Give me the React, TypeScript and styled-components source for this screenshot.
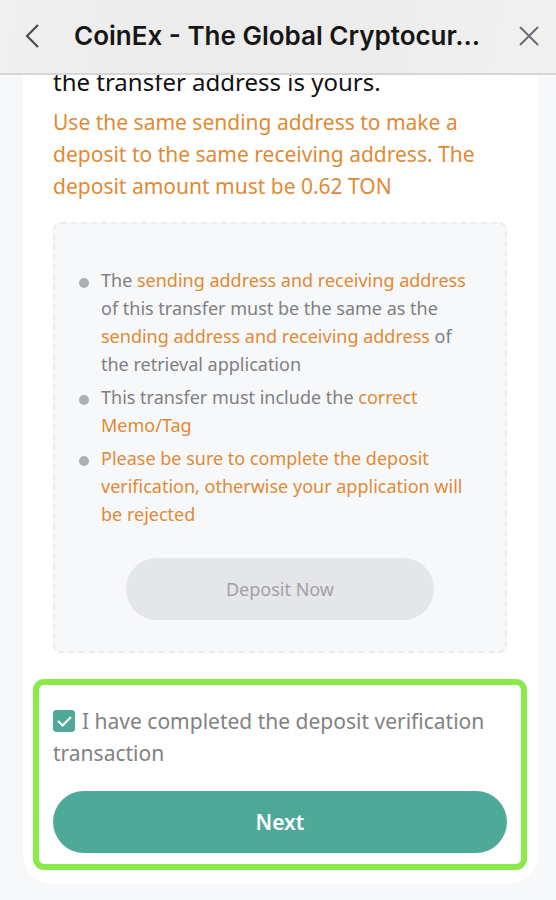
import { useState } from "react";
import styled, { createGlobalStyle } from "styled-components";

const GlobalStyle = createGlobalStyle`
  * {
    box-sizing: border-box;
  }

  body {
    margin: 0;
    background: #f7f8fa;
    font-family: "Noto Sans", "Liberation Sans", sans-serif;
    font-size: 21px;
    line-height: 32px;
  }

  button {
    font-family: inherit;
    cursor: pointer;
  }
`;

const Header = styled.header`
  position: sticky;
  top: 0;
  z-index: 1;
  display: flex;
  align-items: center;
  height: 75px;
  padding: 0 5px 2px 10px;
  border-bottom: 2px solid #d6d6d6;
  background: linear-gradient(100deg, #f1f0ef, #ececec 30%, #ececec 60%, #f2f1f0);
`;

const IconButton = styled.button`
  display: flex;
  flex: none;
  align-items: center;
  justify-content: center;
  width: 44px;
  height: 44px;
  padding: 0;
  border: 0;
  background: none;
  color: ${({ color }) => color};
`;

const Title = styled.h1`
  flex: 1;
  margin: 0;
  padding-left: 20px;
  color: #161616;
  font-family: Inter, sans-serif;
  font-size: 26px;
  font-weight: 600;
  white-space: nowrap;
`;

const Card = styled.main`
  margin: -9px 18px 16px 23px;
  padding: 0 11px 14px 10px;
  border-radius: 0 0 30px 30px;
  background: #fff;
`;

const Section = styled.section`
  padding: 0 20px 26px;
`;

const Intro = styled.p`
  margin: 0;
  color: #111;
  font-size: 24px;
`;

const Warning = styled.p`
  margin: 8px 0 20px;
  color: #e08a35;
`;

const Panel = styled.div`
  padding: 42px 28px 31px 24px;
  border: 2px dashed #ebecef;
  border-radius: 8px;
  background: #f7f8fa;
`;

const Rules = styled.ul`
  display: grid;
  gap: 5px;
  margin: 0;
  padding: 0;
  list-style: none;
  color: #7f8081;
  font-size: 18px;
  line-height: 28px;
`;

const Rule = styled.li`
  display: flex;
  gap: 12px;

  &::before {
    content: "";
    flex: none;
    width: 10px;
    height: 10px;
    margin-top: 12px;
    border-radius: 50%;
    background: #acaeb0;
  }
`;

const Highlight = styled.span`
  color: #e08a35;
`;

const PillButton = styled.button`
  display: block;
  width: 100%;
  height: 62px;
  padding: 0;
  border: 0;
  border-radius: 31px;
  background: #4fa998;
  color: #fff;
  font-size: 21px;
  font-weight: 600;
`;

const DepositButtonRow = styled.div`
  padding: 30px 43px 0 47px;
`;

const DepositButton = styled(PillButton)`
  background: #e5e6ea;
  color: #a1a2a5;
  font-size: 18px;
  font-weight: 400;
`;

const ConfirmFrame = styled.section`
  padding: 20px 14px 11px;
  border: 6px solid #89eb49;
  border-radius: 11px;
`;

const ConfirmLabel = styled.label`
  display: block;
  margin-bottom: 22px;
  color: #828282;
`;

const Checkbox = styled.input`
  appearance: none;
  width: 22px;
  height: 22px;
  margin: 0 7px 0 0;
  border-radius: 3px;
  border: 1px solid #4fa998;
  vertical-align: -3px;

  &:checked {
    background: #4fa998
      url("data:image/svg+xml,%3Csvg xmlns='http://www.w3.org/2000/svg' viewBox='0 0 20 20'%3E%3Cpath d='M4 10l4.5 4.5L17 6' fill='none' stroke='white' stroke-width='2.2'/%3E%3C/svg%3E")
      center / 20px no-repeat;
  }
`;

const App = () => {
  const [confirmed, setConfirmed] = useState(true);

  return (
    <>
      <GlobalStyle />
      <Header>
        <IconButton type="button" aria-label="Back" color="#4c4c4e">
          <svg width="16" height="26" viewBox="0 0 16 26" fill="none">
            <path d="M14 2L3 13l11 11" stroke="currentColor" strokeWidth="2.2" />
          </svg>
        </IconButton>
        <Title>CoinEx - The Global Cryptocur...</Title>
        <IconButton type="button" aria-label="Close" color="#6c6c74">
          <svg width="20" height="20" viewBox="0 0 20 20" fill="none">
            <path
              d="M1.5 1.5l17 17M18.5 1.5l-17 17"
              stroke="currentColor"
              strokeWidth="2"
              strokeLinecap="round"
            />
          </svg>
        </IconButton>
      </Header>
      <Card>
        <Section>
          <Intro>the transfer address is yours.</Intro>
          <Warning>
            Use the same sending address to make a deposit to the same receiving
            address. The deposit amount must be 0.62 TON
          </Warning>
          <Panel>
            <Rules>
              <Rule>
                <span>
                  The <Highlight>sending address and receiving address</Highlight>{" "}
                  of this transfer must be the same as the{" "}
                  <Highlight>sending address and receiving address</Highlight> of
                  the retrieval application
                </span>
              </Rule>
              <Rule>
                <span>
                  This transfer must include the{" "}
                  <Highlight>correct Memo/Tag</Highlight>
                </span>
              </Rule>
              <Rule>
                <Highlight>
                  Please be sure to complete the deposit verification, otherwise
                  your application will be rejected
                </Highlight>
              </Rule>
            </Rules>
            <DepositButtonRow>
              <DepositButton type="button" disabled>
                Deposit Now
              </DepositButton>
            </DepositButtonRow>
          </Panel>
        </Section>
        <ConfirmFrame>
          <ConfirmLabel>
            <Checkbox
              type="checkbox"
              checked={confirmed}
              onChange={(e) => setConfirmed(e.target.checked)}
            />
            I have completed the deposit verification transaction
          </ConfirmLabel>
          <PillButton type="button" disabled={!confirmed}>
            Next
          </PillButton>
        </ConfirmFrame>
      </Card>
    </>
  );
};

export default App;
